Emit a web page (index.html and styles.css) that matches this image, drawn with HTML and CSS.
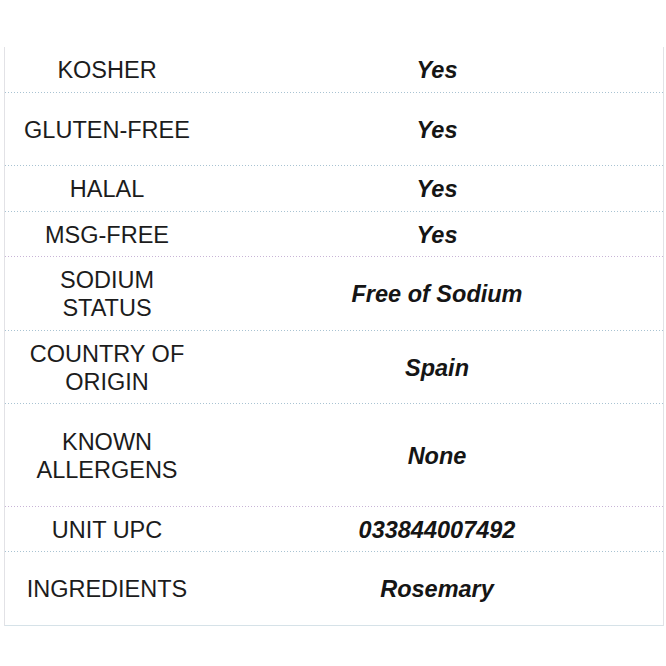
FILE: index.html
```html
<!DOCTYPE html>
<html>
<head>
<meta charset="utf-8">
<link rel="stylesheet" href="styles.css">
</head>
<body>
<div class="page">
  <div class="specs">
    <div class="row h46"><div class="label">KOSHER</div><div class="value">Yes</div></div>
    <div class="row h73"><div class="label">GLUTEN-FREE</div><div class="value">Yes</div></div>
    <div class="row h46"><div class="label">HALAL</div><div class="value">Yes</div></div>
    <div class="row h45 pink"><div class="label">MSG-FREE</div><div class="value">Yes</div></div>
    <div class="row h74"><div class="label">SODIUM STATUS</div><div class="value">Free of Sodium</div></div>
    <div class="row h73"><div class="label">COUNTRY OF ORIGIN</div><div class="value">Spain</div></div>
    <div class="row h103 pink"><div class="label">KNOWN ALLERGENS</div><div class="value">None</div></div>
    <div class="row h45"><div class="label">UNIT UPC</div><div class="value">033844007492</div></div>
    <div class="row h74 last"><div class="label">INGREDIENTS</div><div class="value">Rosemary</div></div>
  </div>
</div>
</body>
</html>
```

FILE: styles.css
```css
html, body {
  margin: 0;
  padding: 0;
  background: #ffffff;
}
.page {
  padding: 47px 2px 0 4px;
}
.specs {
  width: 660px;
  border-left: 1px solid #e2e2e6;
  border-right: 1px solid #e2e2e6;
  box-sizing: border-box;
  font-family: "Liberation Sans", Arial, sans-serif;
  font-size: 23.5px;
  line-height: 28px;
  color: #1c1c1c;
}
.row {
  display: grid;
  grid-template-columns: 204px 1fr;
  box-sizing: border-box;
  background-image: linear-gradient(to right, #a9c3d2 1px, transparent 1px);
  background-size: 3px 1px;
  background-repeat: repeat-x;
  background-position: left bottom;
}
.row.pink {
  background-image: linear-gradient(to right, #c8b4d6 1px, transparent 1px);
}
.row.last {
  background-image: none;
  border-bottom: 1px solid #d6e2e8;
}
.h45 { height: 45px; }
.h46 { height: 46px; }
.h73 { height: 73px; }
.h74 { height: 74px; }
.h103 { height: 103px; }
.label, .value {
  display: flex;
  align-items: center;
  justify-content: center;
  text-align: center;
}
.label {
  padding: 0 10px;
}
.value {
  padding-left: 2px;
  font-weight: bold;
  font-style: italic;
  color: #151515;
}
```
